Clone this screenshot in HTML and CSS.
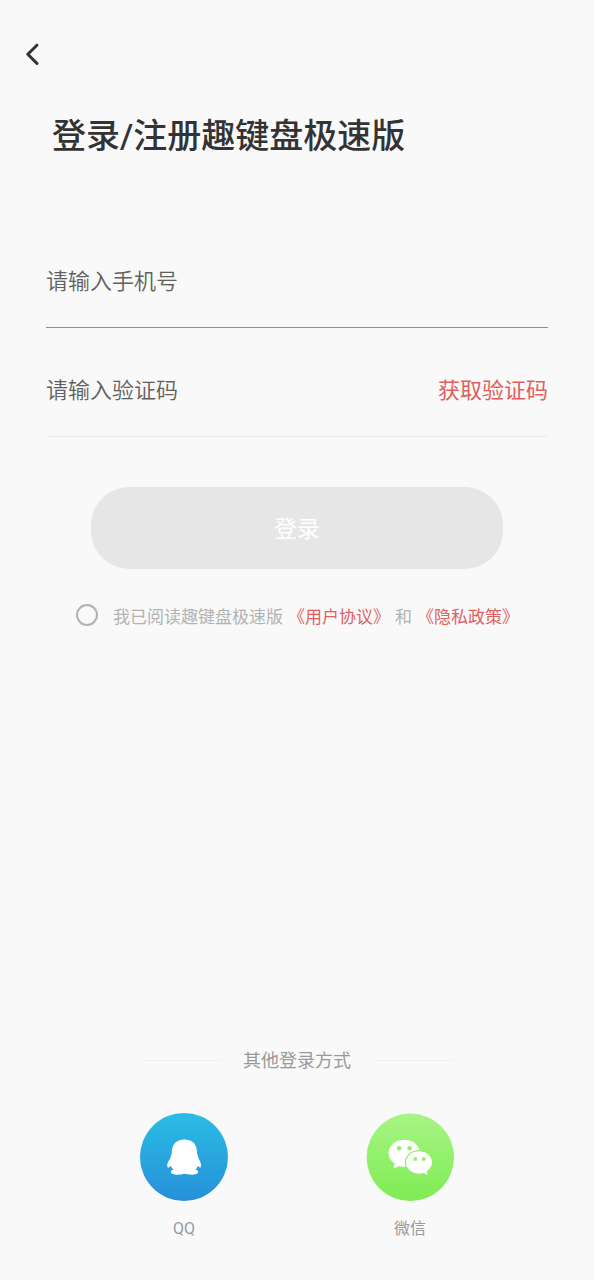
FILE: index.html
```html
<!DOCTYPE html>
<html lang="zh-CN">
<head>
<meta charset="utf-8">
<meta name="viewport" content="width=device-width, initial-scale=1">
<title>登录/注册趣键盘极速版</title>
<link rel="stylesheet" href="styles.css">
</head>
<body>
<div class="page">
  <header class="topbar">
    <button class="back" type="button" aria-label="返回">
      <svg width="14" height="24" viewBox="0 0 14 24" fill="none" stroke="#333" stroke-width="3" stroke-linecap="round" stroke-linejoin="round"><path d="M10.900 3.200 1.800 12.300l9.100 9.100"/></svg>
    </button>
  </header>
  <main class="main">
    <h1 class="title">登录/注册趣键盘极速版</h1>
    <form class="form">
      <div class="field field-active">
        <input class="input" type="tel" placeholder="请输入手机号" aria-label="手机号">
      </div>
      <div class="field">
        <input class="input" type="text" placeholder="请输入验证码" aria-label="验证码">
        <button class="get-code" type="button">获取验证码</button>
      </div>
      <button class="submit" type="submit">登录</button>
      <div class="agreement">
        <input class="check" type="checkbox" id="agree">
        <label class="terms" for="agree">我已阅读趣键盘极速版<a class="link" href="#terms">《用户协议》</a>和<a class="link" href="#privacy">《隐私政策》</a></label>
      </div>
    </form>
  </main>
  <footer class="others">
    <div class="divider"><span class="divider-text">其他登录方式</span></div>
    <div class="providers">
      <button class="provider" type="button">
        <svg class="logo" viewBox="0 0 88 88">
          <defs><linearGradient id="qq" x1="0" y1="0" x2="0" y2="1"><stop offset="0" stop-color="#2abde4"/><stop offset="1" stop-color="#2690d9"/></linearGradient></defs>
          <circle cx="44" cy="44" r="44" fill="url(#qq)"/>
          <path fill="#fff" d="M44.500 26.500C51.500 26.500 55.600 30 56.700 36C57 38 56.900 39.500 57.200 41C57.500 42.500 58.300 43 58.500 45.500C60.500 48.500 61.500 51.500 60.800 54C60.500 55.200 59.500 54.500 57.800 52.800C57.400 54.200 56.700 55.500 55.500 56.600C57.400 57.200 58.200 58 58.100 59C58 61 55 61.700 51.500 61.700C48.500 61.700 46.500 61.300 44.500 60.800C42.500 61.300 40.500 61.700 37.500 61.700C34 61.700 31 61 30.900 59C30.900 57.800 31.800 57 33.500 56.600C32.100 55.500 31.300 54.200 30.900 52.800C29.300 54.500 28.100 55.200 27.500 54C26.500 51.500 27.900 48.500 30.300 45.500C30.600 43.300 31.200 42.500 31.600 41C31.900 39.500 31.700 38 32.200 36C33.400 30 37.500 26.500 44.500 26.500Z"/>
        </svg>
        <span class="name">QQ</span>
      </button>
      <button class="provider" type="button">
        <svg class="logo" viewBox="0 0 88 88">
          <defs><linearGradient id="wx" x1="0" y1="0" x2="0" y2="1"><stop offset="0" stop-color="#a7f485"/><stop offset="1" stop-color="#7eec52"/></linearGradient></defs>
          <circle cx="44.300" cy="44.300" r="43.700" fill="url(#wx)"/>
          <path fill="#fff" d="M38.300 26.800c8.800 0 15.800 6 15.800 13.500s-7 13.500-15.800 13.500c-1.800 0-3.400-.2-5-.6L27.500 55.200l1.300-4.700c-4.100-2.400-6.300-5.900-6.300-10.200 0-7.500 7-13.500 15.800-13.500Z"/>
          <path fill="#fff" stroke="#91f069" stroke-width="1.300" d="M53 37.700c7.500 0 13.600 5.200 13.600 11.800 0 3.600-2.100 6.800-5.200 9l1.100 4.500-5.100-2.500c-1.400.5-2.900.7-4.400.7-7.500 0-13.600-5.200-13.600-11.700s6.100-11.800 13.600-11.800Z"/>
          <g fill="#91f069"><circle cx="33" cy="35.300" r="2.200"/><circle cx="43.600" cy="35.300" r="2.200"/><circle cx="49.300" cy="46" r="1.900"/><circle cx="57.800" cy="46" r="1.900"/></g>
        </svg>
        <span class="name">微信</span>
      </button>
    </div>
  </footer>
</div>
</body>
</html>
```
FILE: styles.css
```css
* { box-sizing: border-box; }
body {
  margin: 0;
  background: #f9f9f9;
  color: #333;
  font-family: Roboto, "Noto Sans CJK SC", sans-serif;
}
button, input { font: inherit; }
button {
  border: 0;
  padding: 0;
  background: none;
  cursor: pointer;
}
.page {
  display: flex;
  flex-direction: column;
  min-height: 100vh;
}
.topbar { padding: 36px 20px 0; }
.back {
  display: grid;
  place-items: center;
  width: 26px;
  height: 36px;
}
.main { padding: 39px 46px 0; }
.title {
  margin: 0 0 0 6px;
  font-size: 34px;
  line-height: 50px;
  font-weight: 500;
}
.form {
  display: flex;
  flex-direction: column;
  margin-top: 58px;
}
.field {
  display: flex;
  align-items: center;
  padding-top: 16px;
  border-bottom: 1px solid #ececec;
}
.field-active { border-bottom-color: #d07575; }
.input {
  flex: 1;
  min-width: 0;
  height: 92px;
  border: 0;
  padding: 0;
  background: none;
  outline: 0;
  font-size: 22px;
  font-weight: 350;
  color: #333;
}
.input::placeholder { color: #606060; opacity: 1; }
.get-code {
  padding-bottom: 4px;
  font-size: 22px;
  color: #e06060;
}
.submit {
  height: 82px;
  margin: 50px 45px 0;
  padding-bottom: 2px;
  border-radius: 38px;
  background: #e6e6e6;
  color: #fff;
  font-size: 23px;
}
.agreement {
  display: flex;
  align-items: center;
  gap: 15px;
  margin: 31px 0 0 30px;
}
.check {
  appearance: none;
  flex: none;
  width: 22px;
  height: 22px;
  margin: 0;
  border: 2px solid #b2b2b2;
  border-radius: 50%;
}
.terms {
  padding-top: 4px;
  font-size: 17px;
  line-height: 26px;
  color: #b2b2b2;
}
.link {
  margin: 0 5px;
  color: #e06060;
  text-decoration: none;
}
.others {
  margin-top: auto;
  padding: 0 140px 39px;
}
.divider {
  display: flex;
  align-items: center;
  gap: 22px;
  padding: 0 2px;
  font-size: 18px;
  line-height: 26px;
  color: #999;
}
.divider-text { padding-top: 2px; }
.divider::before, .divider::after {
  content: "";
  flex: 1;
  height: 1px;
  background: #f0f0f0;
}
.providers {
  display: flex;
  justify-content: space-between;
  margin-top: 39px;
}
.provider {
  display: flex;
  flex-direction: column;
  align-items: center;
  gap: 16px;
}
.logo { width: 88px; height: 88px; }
.name {
  font-size: 16px;
  line-height: 24px;
  color: #999;
}
```
